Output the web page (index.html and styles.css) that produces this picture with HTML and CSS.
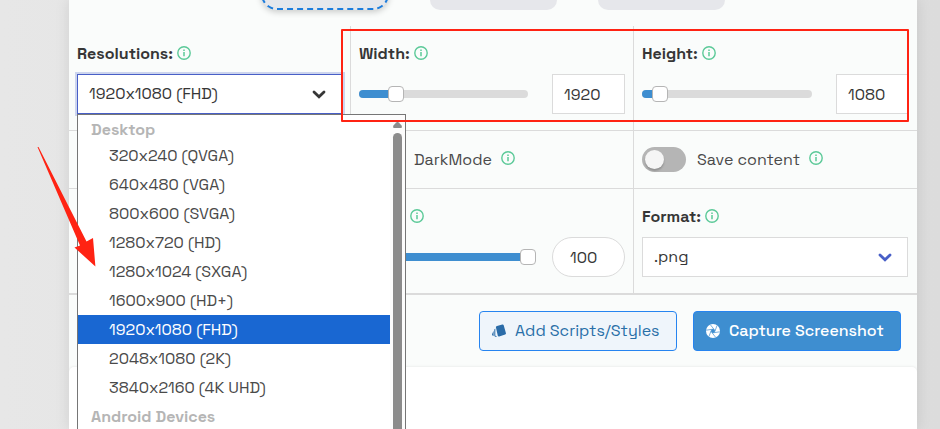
FILE: index.html
```
<!DOCTYPE html>
<html lang="en">
<head>
  <meta charset="UTF-8" />
  <meta name="viewport" content="width=device-width, initial-scale=1.0" />
  <title>Capture Screenshot</title>
  <link rel="stylesheet" href="styles.css">
</head>
<body>
  <svg class="defs" width="0" height="0">
    <symbol id="info" viewBox="0 0 14 14">
      <circle cx="7" cy="7" r="6.2" fill="none" stroke="#5bc998" stroke-width="1.4" />
      <path d="M7 6v4.3M7 3.6v1.5" stroke="#5bc998" stroke-width="1.5" />
    </symbol>
    <symbol id="chevron" viewBox="0 0 14 9">
      <path d="M2 2l5 4.8L12 2" fill="none" stroke="currentColor" stroke-width="2.8" stroke-linecap="round" />
    </symbol>
  </svg>

  <div class="container">
    <div class="tabs">
      <div class="tab active"></div>
      <div class="tab"></div>
      <div class="tab"></div>
    </div>

    <div class="row row-size">
      <div class="cell">
        <div class="label"><span>Resolutions:</span><svg class="info"><use href="#info" /></svg></div>
        <div class="select focused"><span>1920x1080 (FHD)</span><svg class="chevron"><use href="#chevron" /></svg></div>
        <div class="dropdown">
          <div class="options">
            <div class="group">Desktop</div>
            <div class="option">320x240 (QVGA)</div>
            <div class="option">640x480 (VGA)</div>
            <div class="option">800x600 (SVGA)</div>
            <div class="option">1280x720 (HD)</div>
            <div class="option">1280x1024 (SXGA)</div>
            <div class="option">1600x900 (HD+)</div>
            <div class="option selected">1920x1080 (FHD)</div>
            <div class="option">2048x1080 (2K)</div>
            <div class="option">3840x2160 (4K UHD)</div>
            <div class="group android">Android Devices</div>
          </div>
          <div class="scrollbar">
            <svg class="scroll-up" viewBox="0 0 9 6"><path d="M3.2 .4Q4.5-.5 5.8.4L8.6 3.4Q9.4 6 8 6H1Q-.4 6 .4 3.4Z" fill="#8b8b8b" /></svg>
            <div class="scroll-thumb"></div>
          </div>
        </div>
      </div>
      <div class="cell">
        <div class="label"><span>Width:</span><svg class="info"><use href="#info" /></svg></div>
        <div class="control">
          <div class="slider"><div class="fill" style="width:37px"></div><div class="thumb"></div></div>
          <div class="number">1920</div>
        </div>
      </div>
      <div class="cell">
        <div class="label"><span>Height:</span><svg class="info"><use href="#info" /></svg></div>
        <div class="control">
          <div class="slider"><div class="fill" style="width:18px"></div><div class="thumb"></div></div>
          <div class="number">1080</div>
        </div>
      </div>
    </div>

    <div class="row row-toggle">
      <div class="cell"></div>
      <div class="cell toggle-cell"><div class="switch"></div><span>DarkMode</span><svg class="info"><use href="#info" /></svg></div>
      <div class="cell toggle-cell"><div class="switch"></div><span>Save content</span><svg class="info"><use href="#info" /></svg></div>
    </div>

    <div class="row row-format">
      <div class="cell"></div>
      <div class="cell">
        <div class="label"><span class="label-space"></span><svg class="info"><use href="#info" /></svg></div>
        <div class="control quality">
          <div class="slider"><div class="fill" style="width:169px"></div><div class="thumb"></div></div>
          <div class="number round">100</div>
        </div>
      </div>
      <div class="cell">
        <div class="label"><span>Format:</span><svg class="info"><use href="#info" /></svg></div>
        <div class="select"><span>.png</span><svg class="chevron"><use href="#chevron" /></svg></div>
      </div>
    </div>

    <div class="actions">
      <div class="button outline">
        <svg class="icon" viewBox="0 0 14 14">
          <path d="M5 1.9L10.300.5q1-.3 1.400.7l2.200 7.800q.3 1-.7 1.400l-6 2q-1 .3-1.400-.7L3.900 3.200q-.2-1 1.100-1.300Z" fill="#2b6ca8" />
          <path d="M3.300 4.600v7l1.800 1.400q-2.800.4-2.800-1.400V5.600ZM1.600 6.800v5.300Q-.4 11.600.1 10Z" fill="#2b6ca8" />
        </svg>
        <span>Add Scripts/Styles</span>
      </div>
      <div class="button primary">
        <svg class="icon" viewBox="0 0 14 14">
          <circle cx="7" cy="7" r="7" fill="#fff" />
          <path d="M9 7L8 8.700H6L5 7l1-1.700h2ZM8 5.300L4.300.7M9 7L11 1.600M8 8.700l5.700-.9M6 8.700l3.700 4.600M5 7L3 12.400M6 5.300L.3 6.200" fill="#3e8ed0" stroke="#3e8ed0" stroke-width=".7" />
        </svg>
        <span>Capture Screenshot</span>
      </div>
    </div>

    <div class="preview"></div>
  </div>

  <!-- annotations over the form -->
  <div class="highlight"></div>
  <svg class="arrow" width="60" height="122" viewBox="0 0 60 122">
    <path d="M.5 0L1.5 0L49.5 94.5L56 91L58.4 119.5L37.5 100.5L43 98.5Z" fill="#ff2313" />
  </svg>
</body>
</html>
```
FILE: styles.css
```
* {
  box-sizing: border-box;
}
body {
  margin: 0;
  height: 429px;
  overflow: hidden;
  position: relative;
  font-family: "Space Grotesk", Inter, sans-serif;
  font-size: 16px;
  color: #363636;
  background: linear-gradient(to right, #e7e7e7, #dcdcdc);
}
.defs {
  position: absolute;
}
.container {
  width: 848px;
  height: 429px;
  margin-left: 69px;
  overflow: hidden;
  background: #fafcfb;
  box-shadow: 0 0 14px rgba(0, 0, 0, 0.1);
}
.tabs {
  display: flex;
  gap: 41px;
  height: 26px;
  padding-left: 192px;
}
.tab {
  width: 127px;
  height: 10px;
  border-radius: 0 0 16px 16px;
  background: #e6e7eb;
}
.tab.active {
  height: 40px;
  margin-top: -30px;
  width: 128px;
  border: 2px dashed #1c7cdc;
  border-radius: 16px;
  box-shadow: 0 2px 6px rgba(0, 0, 0, 0.2);
}
.row {
  display: grid;
  grid-template-columns: 282px 283px 283px;
  border-bottom: 1px solid #dbdbdb;
}
.row-size {
  height: 105px;
}
.row-toggle {
  height: 58px;
}
.row-format {
  height: 106px;
  border-bottom-width: 2px;
}
.cell {
  padding: 16px 8px 0;
  border-right: 1px solid #dbdbdb;
  position: relative;
}
.cell:last-child {
  border-right: none;
}
.label {
  display: flex;
  align-items: center;
  height: 24px;
  margin-bottom: 8px;
  font-weight: 600;
}
.label span {
  padding-bottom: 2px;
}
.label-space {
  width: 47px;
}
.info {
  width: 14px;
  height: 14px;
  margin-left: 4px;
  margin-top: -2px;
}
.select {
  display: flex;
  justify-content: space-between;
  align-items: center;
  width: 266px;
  height: 40px;
  padding: 0 15px 0 11px;
  border: 1px solid #dbdbdb;
  background: white;
  color: #363636;
}
.select span {
  padding-bottom: 2px;
}
.select .chevron {
  width: 14px;
  height: 9px;
  color: #485fc7;
}
.select.focused {
  border-color: #485fc7;
  padding: 0 16px 0 11px;
  box-shadow: 0 0 0 2px rgba(72, 95, 199, 0.25);
}
.select.focused .chevron {
  color: #363636;
}
.control {
  display: flex;
  align-items: center;
  gap: 24px;
  height: 40px;
}
.cell:last-child .control {
  width: 267px;
}
.slider {
  display: flex;
  align-items: center;
  flex: 1;
  height: 8px;
  border-radius: 4px;
  background: #dbdbdb;
}
.fill {
  height: 8px;
  border-radius: 4px 0 0 4px;
  background: #3e8ed0;
}
.thumb {
  width: 16px;
  height: 16px;
  margin-left: -8px;
  flex: none;
  border: 1px solid #b5b5b5;
  border-radius: 4px;
  background: white;
}
.quality {
  gap: 16px;
}
.number {
  width: 73px;
  height: 40px;
  padding-left: 11px;
  line-height: 40px;
  border: 1px solid #dbdbdb;
  background: white;
}
.number.round {
  padding-left: 17px;
  border-radius: 20px;
}
.toggle-cell {
  display: flex;
  align-items: center;
  padding-top: 0;
  color: #4a4a4a;
}
.toggle-cell .info {
  margin-left: 9px;
  margin-top: -3px;
}
.switch {
  width: 44px;
  height: 25px;
  margin-right: 11px;
  padding: 3px;
  border-radius: 13px;
  background: #b5b5b5;
}
.switch::before {
  content: "";
  display: block;
  width: 19px;
  height: 19px;
  border-radius: 50%;
  background: #f5f5f5;
  box-shadow: 0 2px 2px rgba(0, 0, 0, 0.2);
}
.dropdown {
  position: absolute;
  top: 88px;
  left: 8px;
  z-index: 2;
  display: flex;
  width: 329px;
  height: 330px;
  border: 1px solid #767676;
  background: white;
}
.options {
  width: 312px;
}
.group {
  height: 26px;
  padding-left: 13px;
  line-height: 30px;
  font-weight: 600;
  color: #b5b5b5;
}
.group.android {
  height: 29px;
}
.option {
  height: 29px;
  padding-left: 31px;
  line-height: 30px;
  color: #4a4a4a;
}
.option.selected {
  background: #1967d2;
  color: white;
}
.scrollbar {
  width: 15px;
  padding: 7px 3px 0;
  background: #fcfcfc;
}
.scroll-up {
  display: block;
  width: 9px;
  height: 6px;
}
.scroll-thumb {
  width: 9px;
  height: 320px;
  margin-top: 5px;
  border-radius: 5px;
  background: #8b8b8b;
}
.actions {
  display: flex;
  justify-content: flex-end;
  gap: 16px;
  height: 72px;
  padding: 16px 16px 0;
}
.button {
  display: flex;
  align-items: center;
  height: 40px;
  padding-left: 12px;
  border: 1px solid #2684f0;
  border-radius: 4px;
}
.button span {
  padding-bottom: 2px;
}
.button .icon {
  width: 14px;
  height: 14px;
  margin-right: 9px;
}
.outline {
  width: 198px;
  background: #eff5fb;
  color: #296fa8;
}
.primary {
  width: 208px;
  background: #3e8ed0;
  color: white;
  font-weight: 500;
}
.preview {
  height: 62px;
  border-radius: 5px 5px 0 0;
  background: white;
  box-shadow: 0 0 3px rgba(0, 0, 0, 0.1);
}
.highlight {
  position: absolute;
  top: 29px;
  left: 341px;
  z-index: 3;
  width: 568px;
  height: 93px;
  border: 2px solid #ff2313;
  border-radius: 1px;
}
.arrow {
  position: absolute;
  top: 147px;
  left: 37px;
  z-index: 3;
}
```
